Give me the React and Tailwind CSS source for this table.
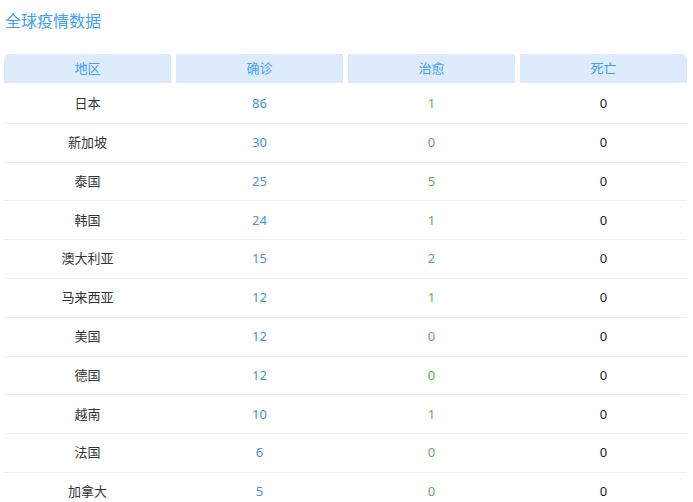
const rows = [
  ['日本', 86, 1, 0],
  ['新加坡', 30, 0, 0],
  ['泰国', 25, 5, 0],
  ['韩国', 24, 1, 0],
  ['澳大利亚', 15, 2, 0],
  ['马来西亚', 12, 1, 0],
  ['美国', 12, 0, 0],
  ['德国', 12, 0, 0],
  ['越南', 10, 1, 0],
  ['法国', 6, 0, 0],
  ['加拿大', 5, 0, 0],
]

export default function App() {
  return (
    <div
      className="w-[693px] h-[502px] overflow-hidden bg-white"
      style={{ fontFamily: '"Noto Sans", "Noto Sans CJK SC", sans-serif' }}
    >
      <h1 className="pl-[5px] pt-[9px] text-[16px] leading-6 text-[#409eff]">全球疫情数据</h1>

      <div className="mt-[21px] pl-1 pr-[6px]">
        {/* Header */}
        <div className="grid grid-cols-4 gap-x-[5px] text-[13px] text-[#409eff]">
          <div className="h-[29px] flex items-center justify-center bg-[#ddebfd] rounded-tl-md">地区</div>
          <div className="h-[29px] flex items-center justify-center bg-[#ddebfd]">确诊</div>
          <div className="h-[29px] flex items-center justify-center bg-[#ddebfd]">治愈</div>
          <div className="h-[29px] flex items-center justify-center bg-[#ddebfd] rounded-tr-md">死亡</div>
        </div>

        {/* Body */}
        <div className="mt-[2px]">
          {rows.map(([name, confirmed, cured, dead]) => (
            <div
              key={name}
              className="grid grid-cols-4 gap-x-[5px] h-[38.8px] border-b border-[#efefef] text-[13px]"
            >
              <div className="flex items-center justify-center text-[#333]">{name}</div>
              <div className="flex items-center justify-center text-[#4a90e2]">{confirmed}</div>
              <div className="flex items-center justify-center text-[#52b35a]">{cured}</div>
              <div className="flex items-center justify-center text-[#222]">{dead}</div>
            </div>
          ))}
        </div>
      </div>
    </div>
  )
}
